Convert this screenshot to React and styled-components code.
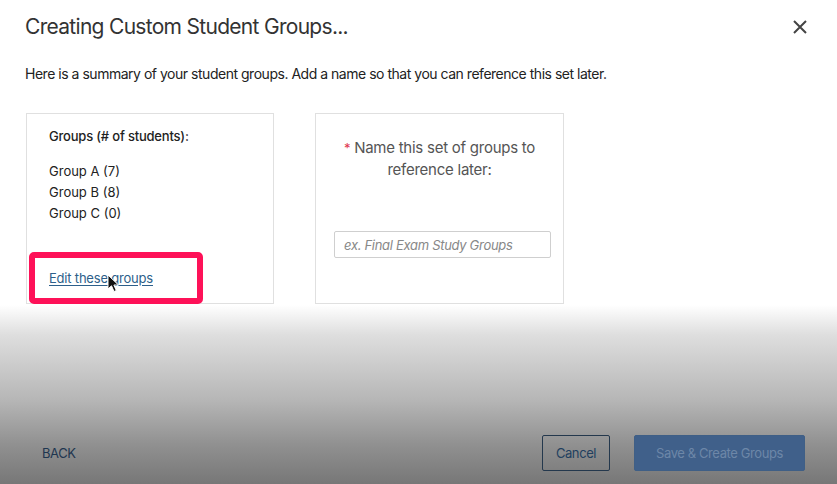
import React from "react";
import styled, { createGlobalStyle } from "styled-components";

const GlobalStyle = createGlobalStyle`
  body {
    margin: 0;
    font-family: "Inter", "Liberation Sans", sans-serif;
  }
`;

const Modal = styled.div`
  position: relative;
  width: 837px;
  height: 484px;
  box-sizing: border-box;
  padding: 13px 0 13px 0;
  display: flex;
  flex-direction: column;
  background: linear-gradient(
    to bottom,
    #ffffff 0px,
    #ffffff 305px,
    #dedede 335px,
    #b6b6b6 400px,
    #909090 445px,
    #777777 484px
  );
  overflow: hidden;
`;

const Header = styled.div`
  display: flex;
  justify-content: space-between;
  align-items: center;
  padding: 0 30px 0 25px;
`;

const Title = styled.h1`
  margin: 0;
  font-size: 21px;
  line-height: 28px;
  font-weight: 400;
  color: #333;
  letter-spacing: -0.7px;
`;

const CloseButton = styled.button`
  border: none;
  background: none;
  padding: 0;
  width: 14px;
  height: 14px;
  display: flex;
  cursor: pointer;
`;

const Intro = styled.p`
  margin: 24px 0 0 25px;
  font-size: 14px;
  line-height: 18px;
  color: #222;
  letter-spacing: -0.48px;
`;

const CardRow = styled.div`
  display: flex;
  gap: 41px;
  margin: 30px 0 0 26px;
`;

const Card = styled.div`
  width: ${(p) => p.$w}px;
  height: 191px;
  box-sizing: border-box;
  border: 1px solid #e0e0e0;
  display: flex;
  flex-direction: column;
  align-items: ${(p) => (p.$center ? "center" : "stretch")};
`;

const GroupsPanel = styled.div`
  padding: 14px 0 0 22px;
  display: flex;
  flex-direction: column;
  height: 100%;
  box-sizing: border-box;
`;

const GroupsHeading = styled.div`
  font-size: 13px;
  line-height: 16px;
  font-weight: 500;
  color: #222;
  letter-spacing: -0.2px;
`;

const GroupList = styled.ul`
  list-style: none;
  margin: 17px 0 0 0;
  padding: 0;
`;

const GroupItem = styled.li`
  font-size: 13px;
  line-height: 21px;
  color: #222;
`;

const EditLink = styled.a`
  margin-top: auto;
  margin-bottom: 16px;
  font-size: 13px;
  line-height: 18px;
  color: #2d5f8a;
  letter-spacing: -0.2px;
  text-decoration: underline;
  text-underline-offset: 2px;
  cursor: pointer;
`;

const NameLabel = styled.div`
  margin: 23px 0 0 0;
  padding: 0 24px;
  text-align: center;
  font-size: 15px;
  line-height: 22px;
  color: #555;
  letter-spacing: -0.25px;
`;

const Required = styled.span`
  color: #e0344e;
  font-size: 13px;
`;

const NameInput = styled.input`
  align-self: flex-start;
  margin: 50px 0 0 18px;
  width: 217px;
  height: 27px;
  box-sizing: border-box;
  border: 1px solid #cfcfcf;
  border-radius: 2px;
  padding: 0 9px;
  font-family: inherit;
  font-size: 13px;
  letter-spacing: -0.3px;
  color: #333;
  outline: none;

  &::placeholder {
    font-style: italic;
    color: #888;
  }
`;

const Footer = styled.div`
  margin-top: auto;
  display: flex;
  align-items: center;
  padding: 0 32px 0 42px;
`;

const BackButton = styled.button`
  border: none;
  background: none;
  padding: 0;
  font-family: inherit;
  font-size: 13px;
  color: #1f3650;
  letter-spacing: -0.4px;
  cursor: pointer;
`;

const Actions = styled.div`
  margin-left: auto;
  display: flex;
  gap: 24px;
`;

const FooterButton = styled.button`
  height: 36px;
  width: ${(p) => p.$w}px;
  box-sizing: border-box;
  border-radius: 2px;
  font-family: inherit;
  font-size: 13px;
  letter-spacing: -0.4px;
  cursor: pointer;
  border: 1px solid ${(p) => (p.$primary ? "#3f5f86" : "#24384d")};
  background: ${(p) => (p.$primary ? "#40608a" : "transparent")};
  color: ${(p) => (p.$primary ? "#6d87a8" : "#22405f")};
`;

const Highlight = styled.div`
  position: absolute;
  left: 29px;
  top: 252px;
  width: 174px;
  height: 52px;
  box-sizing: border-box;
  border: 6px solid #fe1158;
  border-radius: 5px;
  pointer-events: none;
`;

const Pointer = styled.svg`
  position: absolute;
  left: 107px;
  top: 274px;
  pointer-events: none;
`;

const groups = [
  { name: "Group A", count: 7 },
  { name: "Group B", count: 8 },
  { name: "Group C", count: 0 },
];

const App = () => {
  return (
    <>
      <GlobalStyle />
      <Modal>
        <Header>
          <Title>Creating Custom Student Groups...</Title>
          <CloseButton aria-label="Close">
            <svg width="14" height="14" viewBox="0 0 14 14">
              <path d="M1 1L13 13M13 1L1 13" stroke="#444" strokeWidth="2" />
            </svg>
          </CloseButton>
        </Header>
        <Intro>
          Here is a summary of your student groups. Add a name so that you can
          reference this set later.
        </Intro>
        <CardRow>
          <Card $w={248}>
            <GroupsPanel>
              <GroupsHeading>Groups (# of students):</GroupsHeading>
              <GroupList>
                {groups.map((g) => (
                  <GroupItem key={g.name}>
                    {g.name} ({g.count})
                  </GroupItem>
                ))}
              </GroupList>
              <EditLink>Edit these groups</EditLink>
            </GroupsPanel>
          </Card>
          <Card $w={249} $center>
            <NameLabel>
              <Required>*</Required> Name this set of groups to reference
              later:
            </NameLabel>
            <NameInput placeholder="ex. Final Exam Study Groups" />
          </Card>
        </CardRow>
        <Footer>
          <BackButton>BACK</BackButton>
          <Actions>
            <FooterButton $w={68}>Cancel</FooterButton>
            <FooterButton $w={171} $primary>
              Save &amp; Create Groups
            </FooterButton>
          </Actions>
        </Footer>
        <Highlight />
        <Pointer width="13" height="19" viewBox="0 0 13 19">
          <path
            d="M1 1L1 15L4.5 11.8L7 17.5L9.3 16.5L6.9 11L11.5 11Z"
            fill="#111"
            stroke="#fff"
            strokeWidth="1"
          />
        </Pointer>
      </Modal>
    </>
  );
};

export default App;
